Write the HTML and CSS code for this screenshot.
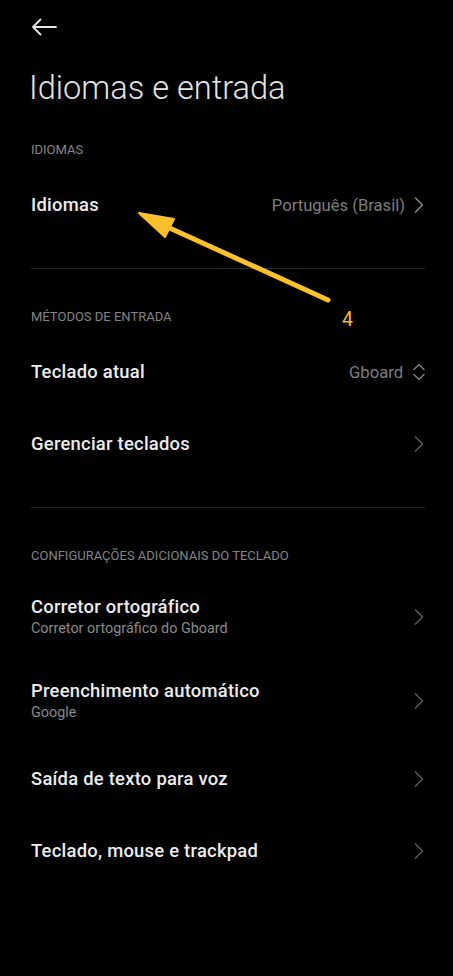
FILE: index.html
```html
<!DOCTYPE html>
<html lang="pt-BR">
<head>
  <meta charset="UTF-8" />
  <meta name="viewport" content="width=device-width, initial-scale=1.0" />
  <title>Idiomas e entrada</title>
  <link rel="stylesheet" href="styles.css">
</head>
<body>
  <div class="screen">
    <div class="topbar">
      <svg class="back" width="26" height="18" viewBox="0 0 26 18">
        <path d="M25 9H2M9.5 1.5L2 9l7.5 7.5" fill="none" stroke="#e6e6e6" stroke-width="1.8" stroke-linecap="round" stroke-linejoin="round"/>
      </svg>
    </div>

    <h1 class="title">Idiomas e entrada</h1>

    <section class="group first">
      <div class="group-label">IDIOMAS</div>
      <div class="row">
        <div class="row-text"><div class="row-title">Idiomas</div></div>
        <span class="row-value">Português (Brasil)</span>
        <svg class="chev light" width="10" height="16" viewBox="0 0 10 16"><path d="M1.5 1L8.5 8 1.5 15" fill="none" stroke-width="1.5" stroke-linecap="round" stroke-linejoin="round"/></svg>
      </div>
    </section>

    <div class="divider"></div>

    <section class="group">
      <div class="group-label">MÉTODOS DE ENTRADA</div>
      <div class="row">
        <div class="row-text"><div class="row-title">Teclado atual</div></div>
        <span class="row-value">Gboard</span>
        <svg class="updown" width="14" height="20" viewBox="0 0 14 20"><path d="M2 7.5L7 2.5l5 5M2 12.5l5 5 5-5" fill="none" stroke-width="1.5" stroke-linecap="round" stroke-linejoin="round"/></svg>
      </div>
      <div class="row">
        <div class="row-text"><div class="row-title">Gerenciar teclados</div></div>
        <svg class="chev" width="10" height="16" viewBox="0 0 10 16"><path d="M1.5 1L8.5 8 1.5 15" fill="none" stroke-width="1.5" stroke-linecap="round" stroke-linejoin="round"/></svg>
      </div>
    </section>

    <div class="divider"></div>

    <section class="group">
      <div class="group-label">CONFIGURAÇÕES ADICIONAIS DO TECLADO</div>
      <div class="row tall">
        <div class="row-text">
          <div class="row-title">Corretor ortográfico</div>
          <div class="row-sub">Corretor ortográfico do Gboard</div>
        </div>
        <svg class="chev" width="10" height="16" viewBox="0 0 10 16"><path d="M1.5 1L8.5 8 1.5 15" fill="none" stroke-width="1.5" stroke-linecap="round" stroke-linejoin="round"/></svg>
      </div>
      <div class="row tall">
        <div class="row-text">
          <div class="row-title">Preenchimento automático</div>
          <div class="row-sub">Google</div>
        </div>
        <svg class="chev" width="10" height="16" viewBox="0 0 10 16"><path d="M1.5 1L8.5 8 1.5 15" fill="none" stroke-width="1.5" stroke-linecap="round" stroke-linejoin="round"/></svg>
      </div>
      <div class="row">
        <div class="row-text"><div class="row-title">Saída de texto para voz</div></div>
        <svg class="chev" width="10" height="16" viewBox="0 0 10 16"><path d="M1.5 1L8.5 8 1.5 15" fill="none" stroke-width="1.5" stroke-linecap="round" stroke-linejoin="round"/></svg>
      </div>
      <div class="row">
        <div class="row-text"><div class="row-title">Teclado, mouse e trackpad</div></div>
        <svg class="chev" width="10" height="16" viewBox="0 0 10 16"><path d="M1.5 1L8.5 8 1.5 15" fill="none" stroke-width="1.5" stroke-linecap="round" stroke-linejoin="round"/></svg>
      </div>
    </section>

    <!-- anotação do tutorial -->
    <svg class="pointer" width="453" height="976" viewBox="0 0 453 976">
      <path d="M328 300L152 220" fill="none" stroke="#fcc02e" stroke-width="5" stroke-linecap="round"/>
      <path d="M139 213L174 219L165 237Z" fill="#fcc02e" stroke="#fcc02e" stroke-width="2" stroke-linejoin="round"/>
    </svg>
    <span class="step">4</span>
  </div>
</body>
</html>
```

FILE: styles.css
```css
body {
  margin: 0;
  background: #000;
  font-family: Roboto, "Noto Sans", sans-serif;
  color: #ececec;
}
.screen {
  position: relative;
  width: 453px;
  min-height: 976px;
}
.topbar {
  height: 54px;
  padding-left: 31px;
  display: flex;
  align-items: center;
}
.title {
  margin: 14px 0 0;
  padding-left: 29px;
  font-size: 32.6px;
  line-height: 40px;
  font-weight: 300;
  color: #e4e4e4;
}
.group {
  padding: 0 29px 0 31px;
}
.group.first {
  margin-top: 32px;
}
.group-label {
  font-size: 13px;
  line-height: 20px;
  color: #858585;
  margin-bottom: 9px;
}
.row {
  height: 72px;
  display: flex;
  align-items: center;
  gap: 9px;
}
.row.tall {
  height: 84px;
}
.row-text {
  flex: 1;
}
.row-title {
  font-size: 18.4px;
  line-height: 22px;
  font-weight: 500;
  letter-spacing: 0.25px;
  color: #ececec;
}
.row-sub {
  font-size: 14.4px;
  line-height: 20px;
  margin-top: 1px;
  color: #8a8a8a;
}
.row-value {
  font-size: 16.6px;
  color: #7e7e7e;
}
.chev {
  stroke: #5c5c5c;
}
.chev.light {
  stroke: #8a8a8a;
}
.updown {
  stroke: #7e7e7e;
  margin-right: -2px;
}
.divider {
  height: 1px;
  background: #262626;
  margin: 27px 28px 38px 31px;
}
.pointer {
  position: absolute;
  left: 0;
  top: 0;
  pointer-events: none;
}
.step {
  position: absolute;
  left: 342px;
  top: 308px;
  font-size: 19.5px;
  font-weight: 400;
  color: #f8bc2c;
}
```
